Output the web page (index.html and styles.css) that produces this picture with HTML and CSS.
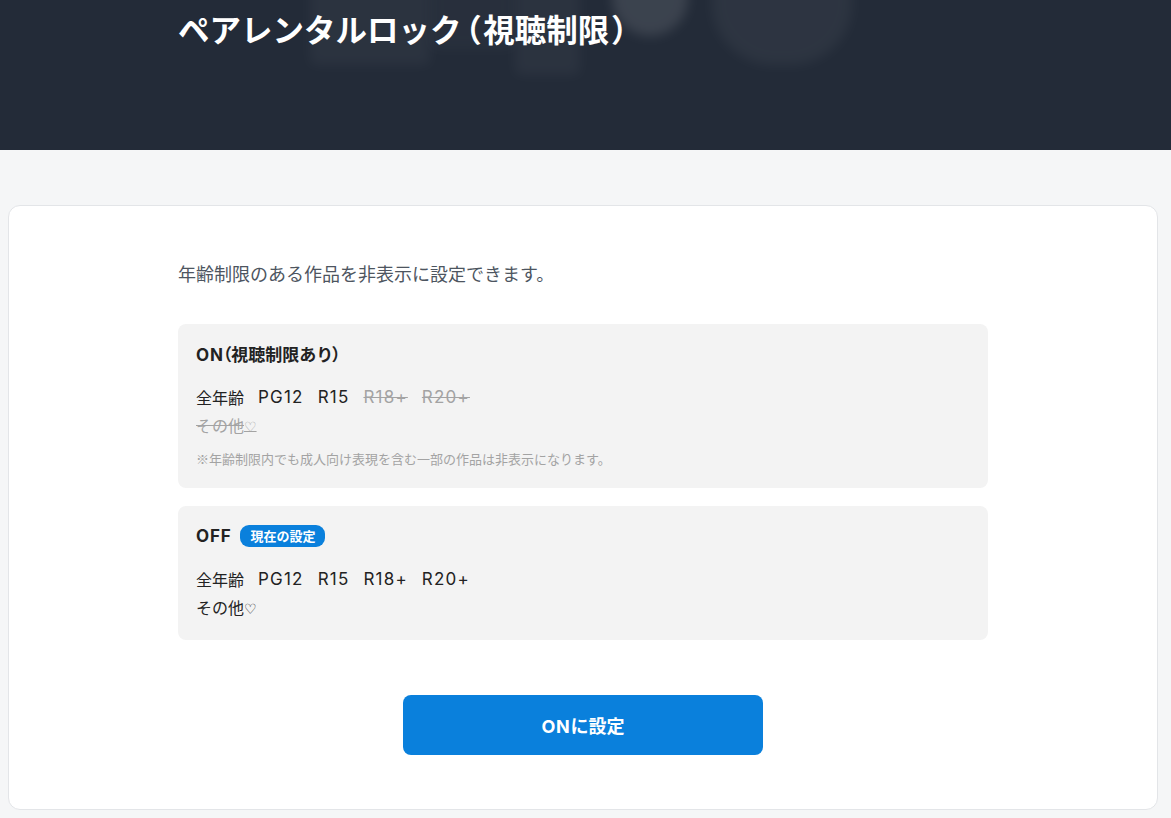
FILE: index.html
```html
<!DOCTYPE html>
<html lang="ja">
<head>
<meta charset="utf-8">
<title>ペアレンタルロック（視聴制限）</title>
<link rel="stylesheet" href="styles.css">
</head>
<body>
<header class="hero">
  <div class="hero-deco">
    <span class="deco d1"></span>
    <span class="deco d2"></span>
    <span class="deco d3"></span>
    <span class="deco d4"></span>
    <span class="deco d5"></span>
  </div>
  <h1 class="hero-title">ペアレンタルロック<span class="paren">（</span>視聴制限<span class="paren">）</span></h1>
</header>
<main class="card">
  <div class="content">
    <p class="lead">年齢制限のある作品を非表示に設定できます。</p>
    <div class="options">
      <section class="option">
        <h2 class="option-title"><span><span class="lat">ON</span><span class="paren">（</span>視聴制限あり<span class="paren">）</span></span></h2>
        <div class="ratings">
          <span class="ja">全年齢</span><span>PG12</span><span>R15</span><span class="off">R18+</span><span class="off">R20+</span>
        </div>
        <div class="ratings"><span class="ja off">その他<span class="heart">♡</span></span></div>
        <p class="note">※年齢制限内でも成人向け表現を含む一部の作品は非表示になります。</p>
      </section>
      <section class="option">
        <h2 class="option-title"><span class="lat">OFF</span><span class="badge">現在の設定</span></h2>
        <div class="ratings">
          <span class="ja">全年齢</span><span>PG12</span><span>R15</span><span>R18+</span><span>R20+</span>
        </div>
        <div class="ratings"><span class="ja">その他<span class="heart">♡</span></span></div>
      </section>
    </div>
    <div class="actions">
      <button class="btn-primary" type="button"><span class="lat">ON</span>に設定</button>
    </div>
  </div>
</main>
</body>
</html>
```

FILE: styles.css
```css
* { box-sizing: border-box; }
html, body { margin: 0; padding: 0; }
body {
  background: #f5f6f7;
  font-family: "Noto Sans CJK JP", "Noto Sans", sans-serif;
  color: #222;
}
.paren { font-feature-settings: "palt"; }
.hero {
  position: relative;
  height: 150px;
  background: #232b38;
  overflow: hidden;
  padding: 5px 0 0 178px;
}
.hero-deco { position: absolute; inset: 0; pointer-events: none; }
.deco { position: absolute; display: block; background: #ffffff; filter: blur(6px); }
.d1 { left: 310px; top: -20px; width: 120px; height: 85px; opacity: 0.035; border-radius: 6px; }
.d2 { left: 515px; top: -20px; width: 65px; height: 95px; opacity: 0.035; border-radius: 6px; }
.d3 { left: 612px; top: -40px; width: 76px; height: 76px; opacity: 0.11; border-radius: 50%; }
.d4 { left: 712px; top: -70px; width: 140px; height: 135px; opacity: 0.045; border-radius: 45%; }
.d5 { left: 430px; top: -20px; width: 85px; height: 70px; opacity: 0.02; border-radius: 6px; }
.hero-title {
  position: relative;
  margin: 0;
  color: #fff;
  font-size: 31.5px;
  line-height: 46px;
  font-weight: 700;
}
.hero-title .paren { padding: 0 3px; }
.card {
  margin: 55px 13px 8px 8px;
  background: #fff;
  border: 1px solid #e3e5e8;
  border-radius: 12px;
  padding: 55px 20px 54px;
}
.content { max-width: 810px; margin: 0 auto; }
.lead {
  margin: 0 0 39px;
  font-size: 18px;
  line-height: 24px;
  height: 24px;
  color: #4d5560;
}
.options { display: flex; flex-direction: column; gap: 18px; }
.option {
  background: #f3f3f3;
  border-radius: 8px;
  padding: 18px 18px 19px;
}
.option-title {
  margin: 0 0 17px;
  height: 24px;
  font-size: 17px;
  line-height: 24px;
  font-weight: 700;
  color: #222;
  display: flex;
  align-items: center;
  gap: 9px;
}
.lat { font-family: "Inter", "Noto Sans CJK JP", sans-serif; letter-spacing: 0.8px; }
.option-title .paren { margin-left: -1px; }
.badge {
  display: inline-block;
  background: #0a80dc;
  color: #fff;
  font-size: 13px;
  line-height: 22px;
  height: 22px;
  font-weight: 700;
  padding: 0 10px;
  border-radius: 9px;
}
.ratings {
  display: flex;
  gap: 14px;
  height: 28px;
  font-family: "Inter", "Noto Sans CJK JP", sans-serif;
  font-size: 17px;
  letter-spacing: 1.2px;
  line-height: 28px;
  color: #222;
}
.ratings .ja { font-family: "Noto Sans CJK JP", sans-serif; font-size: 16px; letter-spacing: 0; margin-right: 0; }
.ratings .off { color: #a3a3a3; text-decoration: line-through; }
.heart { font-family: "DejaVu Sans", sans-serif; font-size: 14px; letter-spacing: 0; }
.note {
  margin: 10px 0 0;
  height: 20px;
  font-size: 13px;
  line-height: 20px;
  color: #a3a3a3;
}
.actions { display: flex; justify-content: center; margin-top: 55px; }
.btn-primary {
  width: 360px;
  height: 60px;
  border: none;
  border-radius: 8px;
  background: #0a80dc;
  color: #fff;
  font-family: "Noto Sans CJK JP", sans-serif;
  font-size: 18px;
  font-weight: 700;
  cursor: pointer;
}
.btn-primary .lat { letter-spacing: 0.6px; }
```
